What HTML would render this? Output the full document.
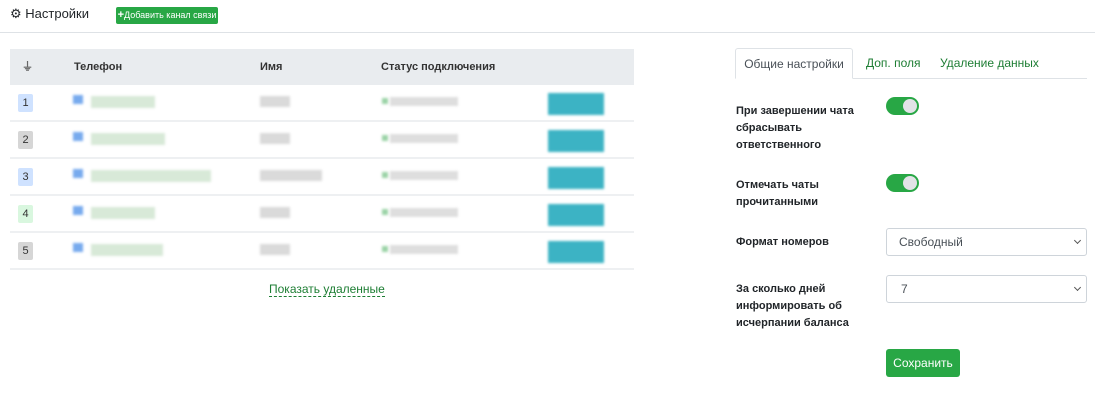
<!DOCTYPE html><html><head><meta charset="utf-8"><style>
*{box-sizing:border-box;margin:0;padding:0}
body{width:1095px;height:400px;background:#fff;font-family:"Liberation Sans","DejaVu Sans",sans-serif;color:#212529;position:relative;overflow:hidden;font-size:12px}
.a{position:absolute}
.b{position:absolute;filter:blur(1.2px)}
.lbl{position:absolute;left:736px;font-weight:bold;font-size:11px;line-height:17px;color:#212529}
.tog{position:absolute;left:886px;width:33px;height:18px;border-radius:9px;background:#28a745}
.tog::after{content:"";position:absolute;right:2px;top:2px;width:14px;height:14px;border-radius:50%;background:#e2e3e7}
.sel{position:absolute;left:886px;width:201px;height:28px;border:1px solid #ced4da;border-radius:3px;font-size:12px;color:#495057;line-height:26px}
.sel::after{content:"";position:absolute;right:6px;top:9px;width:4px;height:4px;border-right:1px solid #555;border-bottom:1px solid #555;transform:rotate(45deg)}
.badge{position:absolute;left:18px;width:15px;height:18px;border-radius:2px;font-size:11px;text-align:center;line-height:18px;color:#333}
.rowline{position:absolute;left:10px;width:624px;height:2px;background:#eef0f2}
</style></head><body>
<div class="a" style="left:0;top:0;width:1095px;height:33px;border-bottom:1px solid #dee2e6"></div>
<div class="a" style="left:10px;top:6px;font-size:13px;color:#212529">⚙ Настройки</div>
<div class="a" style="left:116px;top:7px;width:102px;height:17px;background:#28a745;border-radius:2px;color:#fff;font-size:9px;line-height:17px;text-align:center"><b style="font-size:11px">+</b>Добавить канал связи</div>
<div class="a" style="left:10px;top:49px;width:624px;height:36px;background:#e9ecef;font-weight:bold;font-size:11px;color:#333;line-height:36px">
<span class="a" style="left:12px;color:#666">⏚</span><span class="a" style="left:64px">Телефон</span><span class="a" style="left:250px">Имя</span><span class="a" style="left:371px">Статус подключения</span></div>
<div id="rows"></div>
<script>
var bg=['#cfe2ff','#d6d6d6','#cfe2ff','#d9f7df','#d6d6d6'];var w=[64,74,120,64,72];
var h='';for(var i=0;i<5;i++){var y=85+i*37;
h+='<div class="badge" style="top:'+(y+9)+'px;background:'+bg[i]+'">'+(i+1)+'</div>';
h+='<div class="b" style="left:73px;top:'+(y+10)+'px;width:10px;height:9px;background:#77aaee"></div>';
h+='<div class="b" style="left:91px;top:'+(y+11)+'px;width:'+w[i]+'px;height:12px;background:#d8e9d8"></div>';
h+='<div class="b" style="left:260px;top:'+(y+11)+'px;width:'+(i==2?62:30)+'px;height:11px;background:#dadada"></div>';
h+='<div class="b" style="left:382px;top:'+(y+13)+'px;width:6px;height:6px;background:#9ad3a6"></div>';
h+='<div class="b" style="left:390px;top:'+(y+12)+'px;width:68px;height:9px;background:#dedede"></div>';
h+='<div class="b" style="left:548px;top:'+(y+8)+'px;width:56px;height:22px;background:#3cb3c4"></div>';
h+='<div class="rowline" style="top:'+(y+35)+'px"></div>';}
document.getElementById('rows').innerHTML=h;
</script>
<div class="a" style="left:269px;top:282px;font-size:12px;color:#1e7e34;border-bottom:1px dashed #1e7e34;line-height:14px">Показать удаленные</div>
<div class="a" style="left:735px;top:78px;width:352px;height:1px;background:#dee2e6"></div>
<div class="a" style="left:735px;top:48px;width:118px;height:31px;border:1px solid #dee2e6;border-bottom-color:#fff;border-radius:3px 3px 0 0;background:#fff;font-size:12px;color:#495057;text-align:center;line-height:30px">Общие настройки</div>
<div class="a" style="left:866px;top:48px;font-size:12px;color:#1e7e34;line-height:31px">Доп. поля</div>
<div class="a" style="left:940px;top:48px;font-size:12px;color:#1e7e34;line-height:31px">Удаление данных</div>
<div class="lbl" style="top:103px">При завершении чата<br>сбрасывать<br>ответственного</div>
<div class="tog" style="top:97px"></div>
<div class="lbl" style="top:177px">Отмечать чаты<br>прочитанными</div>
<div class="tog" style="top:174px"></div>
<div class="lbl" style="top:234px">Формат номеров</div>
<div class="sel" style="top:228px;padding-left:12px">Свободный</div>
<div class="lbl" style="top:281px">За сколько дней<br>информировать об<br>исчерпании баланса</div>
<div class="sel" style="top:275px;padding-left:14px">7</div>
<div class="a" style="left:886px;top:349px;width:74px;height:28px;background:#28a745;border-radius:3px;color:#fff;font-size:12px;text-align:center;line-height:28px">Сохранить</div>
</body></html>
